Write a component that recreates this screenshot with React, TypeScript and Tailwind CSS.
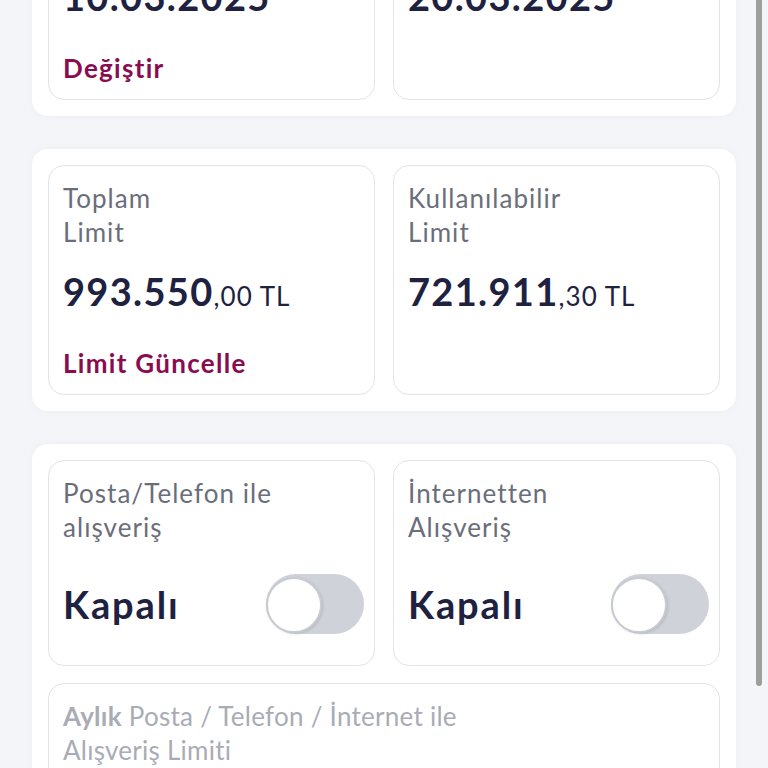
import React from "react";

const font = { fontFamily: "Lato, 'Noto Sans', sans-serif" };

function Toggle() {
  return (
    <div className="relative w-[98px] h-[60px] rounded-full bg-[#cfd2d9] -mr-[4px]">
      <div className="absolute left-0 top-[3px] w-[56px] h-[56px] rounded-full bg-white border-2 border-[#c8cbd2] shadow-[1px_1px_3px_rgba(0,0,0,0.12)]" />
    </div>
  );
}

function Label({ children, light }: { children: React.ReactNode; light?: boolean }) {
  return (
    <div className={`text-[26px] leading-[34px] ${light ? "text-[#a9acb6] tracking-[0.01em]" : "text-[#6a6e7a] tracking-[0.04em]"}`}>
      {children}
    </div>
  );
}

function Amount({ main, frac }: { main: string; frac: string }) {
  return (
    <div className="mt-[21px] h-[42px] flex items-baseline leading-[42px] text-[#1e2240]">
      <span className="text-[38px] font-bold tracking-[0.035em]">{main}</span>
      <span className="text-[26px] tracking-[0.04em]">{frac}</span>
    </div>
  );
}

function LinkText({ children }: { children: React.ReactNode }) {
  return (
    <div className="mt-[34px] text-[26px] leading-[34px] font-bold text-[#8a0c50] tracking-[0.05em]">
      {children}
    </div>
  );
}

function Card({ children, className = "" }: { children: React.ReactNode; className?: string }) {
  return (
    <div className={`rounded-[16px] border border-[#e2e3e9] bg-white px-[14px] pt-[15px] ${className}`}>
      {children}
    </div>
  );
}

function Panel({ children }: { children: React.ReactNode }) {
  return (
    <div className="rounded-[16px] bg-white p-[16px] shadow-[0_0_10px_rgba(30,35,60,0.03)]">
      {children}
    </div>
  );
}

function Kapali() {
  return (
    <div className="mt-[30px] flex items-center justify-between">
      <span className="text-[38px] font-bold text-[#1e2240] tracking-[0.05em]">Kapalı</span>
      <Toggle />
    </div>
  );
}

export default function App() {
  return (
    <div className="relative h-[768px] w-[768px] overflow-hidden bg-[#f4f5f8]" style={font}>
      <div className="-mt-[146px] flex flex-col gap-[33px] px-[32px]">
        <Panel>
          <div className="grid grid-cols-2 gap-[18px]">
            <Card className="h-[230px]">
              <Label>Başlangıç</Label>
              <Label>Tarihi</Label>
              <Amount main="10.03.2025" frac="" />
              <LinkText>Değiştir</LinkText>
            </Card>
            <Card className="h-[230px]">
              <Label>Bitiş</Label>
              <Label>Tarihi</Label>
              <Amount main="20.03.2025" frac="" />
            </Card>
          </div>
        </Panel>
        <Panel>
          <div className="grid grid-cols-2 gap-[18px]">
            <Card className="h-[230px]">
              <Label>Toplam</Label>
              <Label>Limit</Label>
              <Amount main="993.550" frac=",00 TL" />
              <LinkText>Limit Güncelle</LinkText>
            </Card>
            <Card className="h-[230px]">
              <Label>Kullanılabilir</Label>
              <Label>Limit</Label>
              <Amount main="721.911" frac=",30 TL" />
            </Card>
          </div>
        </Panel>
        <Panel>
          <div className="grid grid-cols-2 gap-[18px]">
            <Card className="h-[206px]">
              <Label>Posta/Telefon ile</Label>
              <Label>alışveriş</Label>
              <Kapali />
            </Card>
            <Card className="h-[206px]">
              <Label>İnternetten</Label>
              <Label>Alışveriş</Label>
              <Kapali />
            </Card>
          </div>
          <Card className="mt-[17px] h-[200px]">
            <Label light>
              <span className="font-bold">Aylık</span> Posta / Telefon / İnternet ile
            </Label>
            <Label light>Alışveriş Limiti</Label>
          </Card>
        </Panel>
      </div>
      <div className="absolute right-[6px] top-0 h-[686px] w-[6px] rounded-b-[3px] bg-[#9e9e9e]" />
    </div>
  );
}
